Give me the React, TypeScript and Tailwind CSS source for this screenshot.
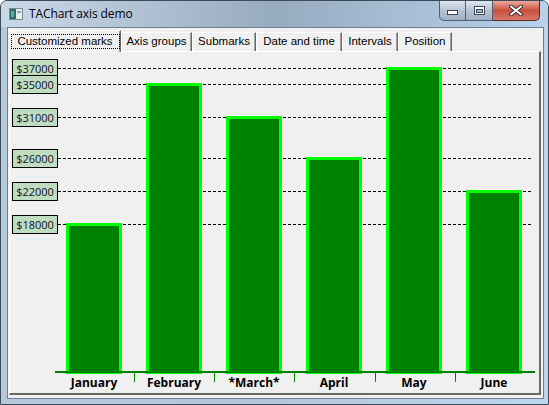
import React from 'react';

const marks = [37000, 35000, 31000, 26000, 22000, 18000];

const months: [string, number][] = [
  ['January', 18000],
  ['February', 35000],
  ['*March*', 31000],
  ['April', 26000],
  ['May', 37000],
  ['June', 22000],
];

const tabs = [
  { label: 'Axis groups', w: 'w-[71px]' },
  { label: 'Submarks', w: 'w-[64px]' },
  { label: 'Date and time', w: 'w-[86px]' },
  { label: 'Intervals', w: 'w-[56px]' },
  { label: 'Position', w: 'w-[54px]' },
];

// value -> page y (axis zero sits at y = 372)
const toY = (v: number) => Math.round(372 - v * 0.00822);

const AppIcon = () => (
  <svg width="14" height="12" viewBox="0 0 14 12">
    <rect x="0.5" y="0.5" width="13" height="11" fill="#e8ecef" stroke="#7d8791" />
    <rect x="1" y="1" width="6" height="10" fill="#2f6f6a" />
    <rect x="2" y="3" width="3" height="6" fill="#5fa7a0" />
    <rect x="8" y="3" width="4" height="2" fill="#9aa8b4" />
  </svg>
);

const CaptionButtons = () => (
  <div className="flex h-[20px] mr-[8px]">
    <div className="w-[27px] h-full flex items-center justify-center border border-t-0 border-[#4f5f72] rounded-bl-[5px] bg-gradient-to-b from-[#dfe7ef] via-[#b6c4d3] to-[#9fb0c3]">
      <svg width="11" height="6" viewBox="0 0 11 6" className="mt-[5px]">
        <rect x="0.5" y="0.5" width="10" height="4" fill="#ffffff" stroke="#3b4654" />
      </svg>
    </div>
    <div className="w-[27px] h-full flex items-center justify-center border border-t-0 border-l-0 border-[#4f5f72] bg-gradient-to-b from-[#dfe7ef] via-[#b6c4d3] to-[#9fb0c3]">
      <svg width="11" height="9" viewBox="0 0 11 9">
        <rect x="0.5" y="0.5" width="10" height="8" fill="#ffffff" stroke="#3b4654" />
        <rect x="2.5" y="3.5" width="6" height="3" fill="#a9b7c6" stroke="#3b4654" />
      </svg>
    </div>
    <div className="w-[47px] h-full flex items-center justify-center border border-t-0 border-l-0 border-[#5a2a24] rounded-br-[5px] bg-gradient-to-b from-[#e9a89c] via-[#c9503f] to-[#d9766a]">
      <svg width="14" height="11" viewBox="0 0 14 11">
        <path d="M2 1.5 L12 9.5 M12 1.5 L2 9.5" stroke="#3b2a28" strokeWidth="4" strokeLinecap="round" />
        <path d="M2 1.5 L12 9.5 M12 1.5 L2 9.5" stroke="#ffffff" strokeWidth="2" strokeLinecap="round" />
      </svg>
    </div>
  </div>
);

const Chart = () => (
  <svg
    width="529"
    height="341"
    viewBox="10 52 529 341"
    className="block font-['Open_Sans',sans-serif]"
    shapeRendering="crispEdges"
  >
    {/* grid lines for the custom marks */}
    {marks.map((v) => (
      <line
        key={`g${v}`}
        x1="58"
        x2="533"
        y1={toY(v) + 0.5}
        y2={toY(v) + 0.5}
        stroke="#000"
        strokeDasharray="3 2"
      />
    ))}

    {/* bars */}
    {months.map(([name, v], i) => {
      const x0 = 66 + 80 * i;
      const top = toY(v) - 1;
      return (
        <rect
          key={name}
          x={x0 + 1.5}
          y={top + 1.5}
          width={53}
          height={372 - top - 1.5}
          fill="#008000"
          stroke="#00ff00"
          strokeWidth="3"
        />
      );
    })}

    {/* bottom axis */}
    <rect x="55" y="371" width="480" height="2" fill="#008000" />
    {[134, 214, 294, 375, 455].map((x) => (
      <rect key={x} x={x} y="373" width="1" height="9" fill="#008000" />
    ))}
    {months.map(([name], i) => (
      <text
        key={`l${name}`}
        x={94 + 80 * i}
        y="387"
        textAnchor="middle"
        className="text-[12px] font-bold"
        fill="#000"
        shapeRendering="auto"
      >
        {name}
      </text>
    ))}

    {/* left axis mark labels */}
    {marks.map((v) => {
      const y = toY(v);
      return (
        <g key={`m${v}`}>
          <rect x="12.5" y={y - 8.5} width="45" height="18" fill="#c0dcc0" stroke="#000" />
          <text
            x="35"
            y={y + 4.5}
            textAnchor="middle"
            className="text-[11px]"
            fill="#10102a"
            shapeRendering="auto"
          >
            ${v}
          </text>
        </g>
      );
    })}
  </svg>
);

export default function App() {
  return (
    <div className="w-[549px] h-[405px] overflow-hidden rounded-t-[7px] border border-[#3d4a58] bg-gradient-to-r from-[#b6c9dc] via-[#b4c8dc] to-[#bcd6f0] font-['Open_Sans',sans-serif] text-black">
      {/* title bar */}
      <div className="h-[26px] flex justify-between items-start bg-gradient-to-r from-[#cad9e8] via-[#97abc0] to-[#b7d2ec]">
        <div className="h-[26px] flex items-center gap-[6px] pl-[8px]">
          <AppIcon />
          <span className="text-[12px] leading-none tracking-[-0.1px]">TAChart axis demo</span>
        </div>
        <CaptionButtons />
      </div>

      {/* client area */}
      <div className="ml-[6px] w-[537px] h-[372px] border border-[#6f7f91] bg-[#f0f0f0] pt-[2px]">
        {/* tab strip */}
        <div className="flex items-end h-[21px] pl-[1px] text-[11.5px] font-['Liberation_Sans',sans-serif]">
          <div className="relative z-10 -mb-px h-[22px] w-[112px] bg-[#f0f0f0] border-t border-l border-white border-r border-r-[#696969] shadow-[inset_-1px_0_0_#a0a0a0] flex items-start justify-center pt-[3px]">
            <span className="w-[109px] h-[15px] border border-dotted border-black flex items-center justify-center leading-none">
              Customized marks
            </span>
          </div>
          {tabs.map((t) => (
            <div
              key={t.label}
              className={`${t.w} h-[19px] bg-[#f0f0f0] border-t border-l border-white border-r border-r-[#696969] shadow-[inset_-1px_0_0_#a0a0a0] flex items-center justify-center leading-none`}
            >
              {t.label}
            </div>
          ))}
        </div>

        {/* tab sheet */}
        <div className="ml-[1px] w-[532px] h-[344px] border-t border-l border-white border-r-2 border-b-2 border-r-[#696969] border-b-[#696969]">
          <Chart />
        </div>
      </div>
    </div>
  );
}
